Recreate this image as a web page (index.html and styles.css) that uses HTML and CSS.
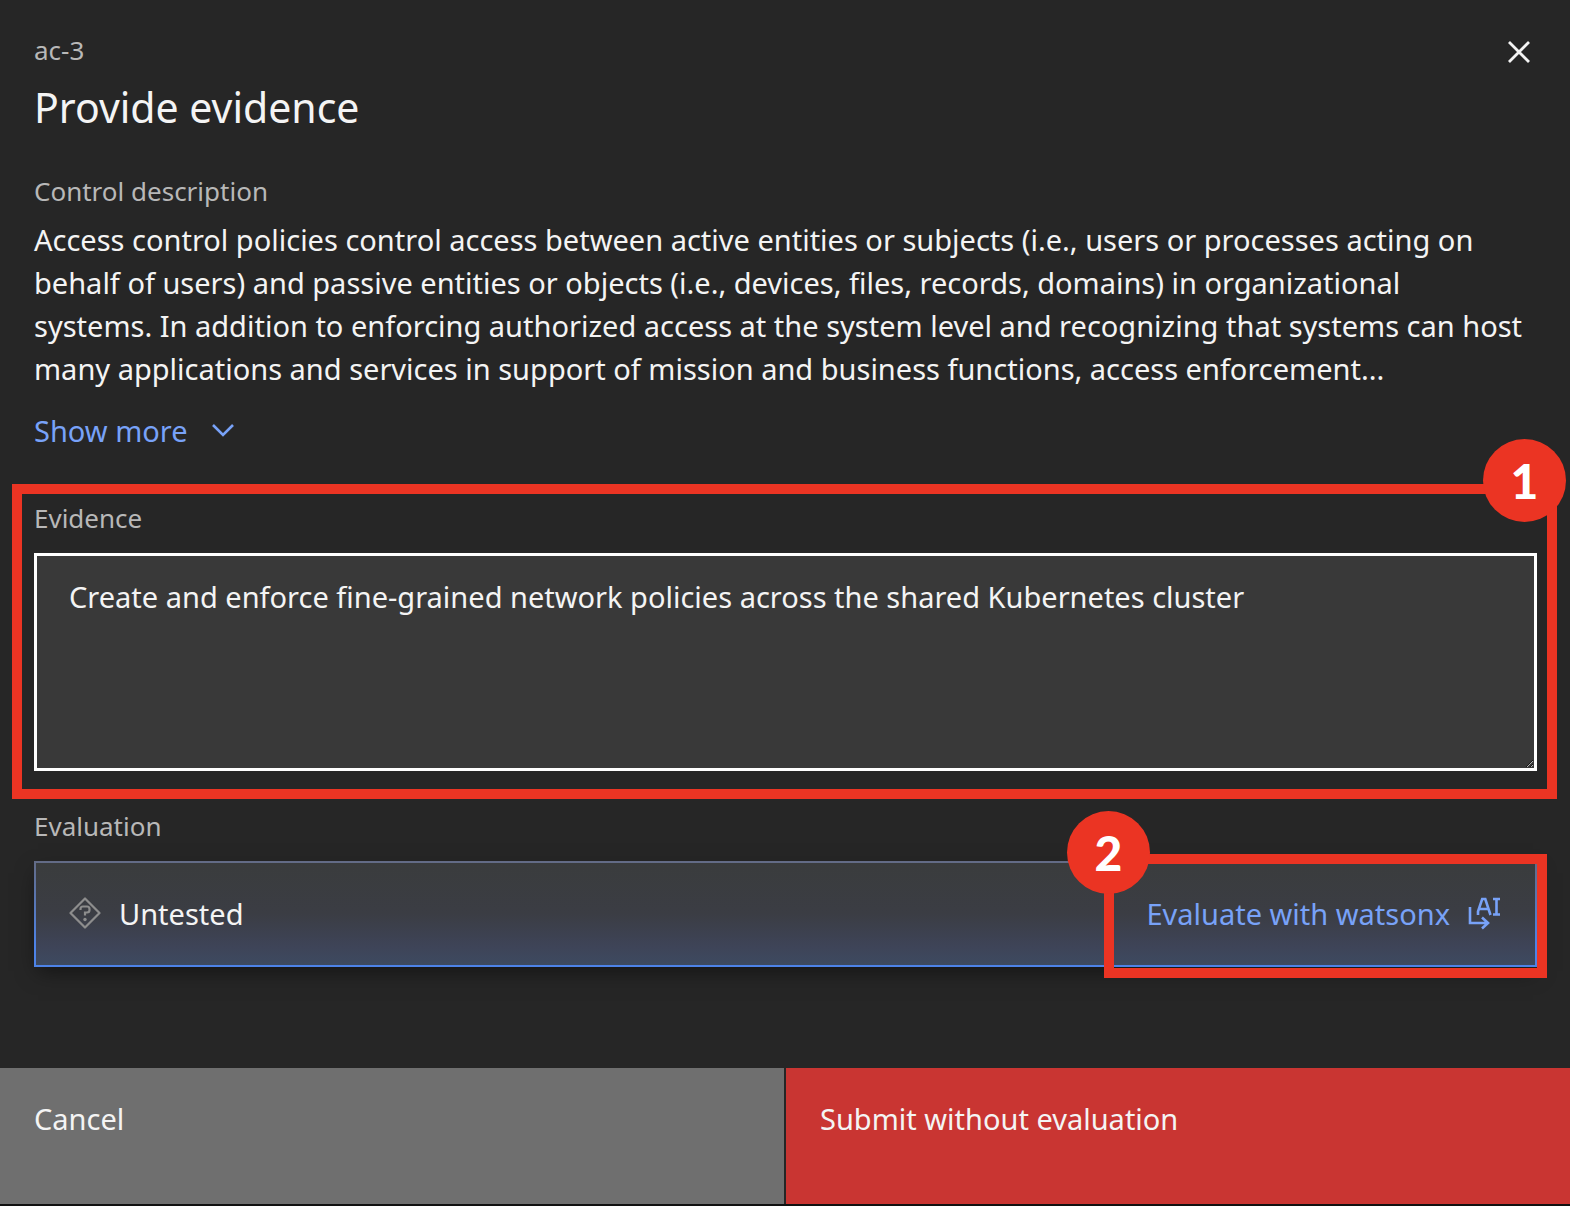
FILE: index.html
```html
<!DOCTYPE html>
<html lang="en">
<head>
<meta charset="utf-8">
<meta name="viewport" content="width=device-width, initial-scale=1">
<title>Provide evidence</title>
<link rel="stylesheet" href="styles.css">
</head>
<body>
<main class="panel">
  <header class="header">
    <div class="heading">
      <p class="label">ac-3</p>
      <h1 class="title">Provide evidence</h1>
    </div>
    <button class="close" type="button" aria-label="Close">
      <svg viewBox="0 0 24 24" width="24" height="24" fill="none" stroke="currentColor" stroke-width="2.8"><path d="M2 2 22 22M22 2 2 22"/></svg>
    </button>
  </header>

  <section class="description">
    <h2 class="label">Control description</h2>
    <p class="text">Access control policies control access between active entities or subjects (i.e., users or processes acting on behalf of users) and passive entities or objects (i.e., devices, files, records, domains) in organizational<br> systems. In addition to enforcing authorized access at the system level and recognizing that systems can host many applications and services in support of mission and business functions, access enforcement...</p>
    <button class="link" type="button">Show more
      <svg viewBox="0 0 22 14" width="22" height="14" fill="none" stroke="currentColor" stroke-width="2.6"><path d="M1 1 11 11 21 1"/></svg>
    </button>
  </section>

  <section class="evidence">
    <label class="label" for="evidence">Evidence</label>
    <textarea class="input" id="evidence">Create and enforce fine-grained network policies across the shared Kubernetes cluster</textarea>
    <div class="ring ring-evidence"><span class="badge badge-right">1</span></div>
  </section>

  <section class="evaluation">
    <h2 class="label">Evaluation</h2>
    <div class="status">
      <svg class="untested" viewBox="0 0 32 32" width="32" height="32" fill="none" stroke="currentColor" stroke-width="2.2"><path d="M16 1.500 30.500 16 16 30.500 1.500 16Z" stroke-linejoin="round"/><path d="M11.500 13V12Q11.500 9.500 14 9.500H18Q20.500 9.500 20.500 12V13Q20.500 15.500 18 15.500H16V18.500"/><circle cx="16" cy="22.500" r="1.700" fill="currentColor" stroke="none"/></svg>
      <span class="status-name">Untested</span>
      <button class="link" type="button">Evaluate with watsonx
        <svg viewBox="0 0 32 34" width="32" height="34" fill="none" stroke="currentColor" stroke-width="2.6"><path d="M2 11V27H20M14 21.500 20 27 14 32.500"/><path d="M10 19V15.500L14.200 3H17.300L22.500 19M11.500 13H20.500M25 3H32M25 18.500H32M28.500 3V18.500"/></svg>
      </button>
      <div class="ring ring-evaluate"><span class="badge badge-left">2</span></div>
    </div>
  </section>

  <footer class="actions">
    <button class="action cancel" type="button">Cancel</button>
    <button class="action submit" type="button">Submit without evaluation</button>
  </footer>
</main>
</body>
</html>
```
FILE: styles.css
```css
* {
  box-sizing: border-box;
}

body {
  margin: 0;
  background: #262626;
  color: #f4f4f4;
  font-family: "Noto Sans", sans-serif;
  font-size: 29px;
  line-height: 43px;
}

h1,
h2,
p {
  margin: 0;
  font-weight: 400;
}

button {
  border: 0;
  padding: 0;
  background: none;
  color: inherit;
  font: inherit;
  text-align: left;
}

svg {
  display: block;
  flex: none;
}

.panel {
  display: flex;
  flex-direction: column;
  min-height: 100vh;
}

.header {
  display: flex;
  justify-content: space-between;
  align-items: flex-start;
  padding: 33px 33px 0 34px;
}

.label {
  display: block;
  color: #b8b8b8;
  font-size: 26px;
  line-height: 34px;
}

.title {
  margin-top: 12px;
  font-size: 41px;
  line-height: 56px;
}

.close {
  margin: 7px 6px 0 0;
}

.description {
  padding: 39px 33px 0 34px;
}

.text {
  margin-top: 10px;
}

.link {
  display: flex;
  align-items: center;
  gap: 24px;
  color: #78a2f8;
}

.description .link {
  margin-top: 19px;
}

.evidence {
  position: relative;
  margin-top: 49px;
  padding: 0 33px 0 34px;
}

.input {
  display: block;
  width: 100%;
  height: 218px;
  margin-top: 18px;
  padding: 19px 32px;
  border: 3px solid #fff;
  border-radius: 0;
  outline: 0;
  background: #393939;
  color: #f4f4f4;
  font: inherit;
  resize: vertical;
}

.evaluation {
  padding: 38px 33px 0 34px;
}

.status {
  position: relative;
  display: flex;
  align-items: center;
  gap: 18px;
  min-height: 106px;
  margin-top: 18px;
  padding: 0 35px 2px 33px;
  border: 2px solid transparent;
  background:
    linear-gradient(#3a3c3d, #3b3d44 50%, #3e4458 82%, #3d4a60) padding-box,
    linear-gradient(#636b85, #4d83e8 80%) border-box;
  box-shadow: 0 8px 20px -4px rgba(0, 0, 0, 0.5);
}

.untested {
  color: #8d8d8d;
}

.status-name {
  flex: 1;
}

.status .link {
  gap: 18px;
}

/* Numbered walkthrough callouts */
.ring {
  position: absolute;
  border: 10px solid #eb3423;
  pointer-events: none;
}

.ring-evidence {
  inset: -17px 13px -28px 12px;
}

.ring-evaluate {
  top: -9px;
  right: -12px;
  bottom: -13px;
  width: 443px;
}

.badge {
  position: absolute;
  display: grid;
  place-items: center;
  width: 83px;
  height: 83px;
  border-radius: 50%;
  background: #eb3423;
  color: #fff;
  font-family: Lato, sans-serif;
  font-size: 48px;
  font-weight: 900;
  line-height: 48px;
}

.badge-right {
  top: -55px;
  right: -19px;
}

.badge-left {
  top: -53px;
  left: -47px;
}

.actions {
  display: grid;
  grid-template-columns: 1fr 1fr;
  gap: 2px;
  margin-top: auto;
  border-bottom: 2px solid #111;
}

.action {
  display: flex;
  align-items: flex-start;
  min-height: 136px;
  padding: 29px 34px;
}

.cancel {
  background: #6f6f6f;
}

.submit {
  background: #c93532;
}
```
